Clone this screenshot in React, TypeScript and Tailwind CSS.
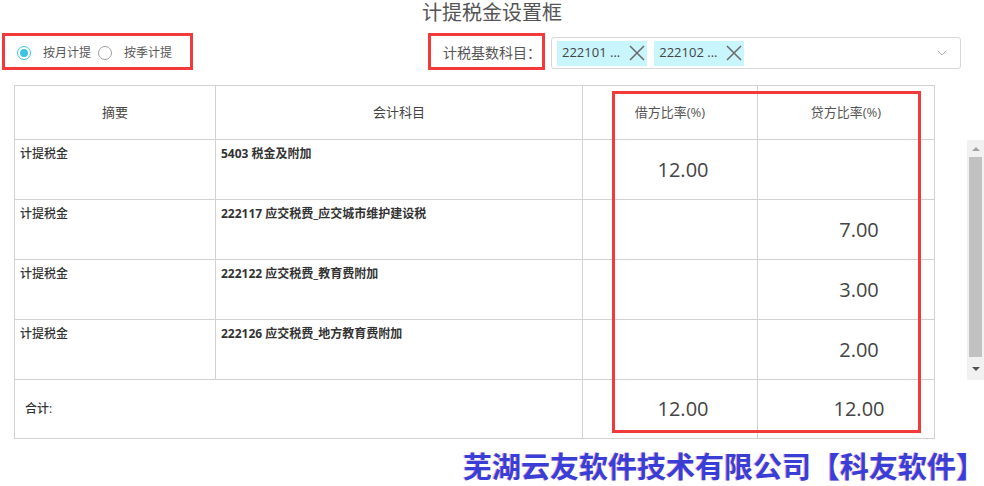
import React from 'react';
import { ChevronDown } from 'lucide-react';

const rows = [
  { summary: '计提税金', code: '5403', name: '税金及附加', debit: '12.00', credit: '' },
  { summary: '计提税金', code: '222117', name: '应交税费_应交城市维护建设税', debit: '', credit: '7.00' },
  { summary: '计提税金', code: '222122', name: '应交税费_教育费附加', debit: '', credit: '3.00' },
  { summary: '计提税金', code: '222126', name: '应交税费_地方教育费附加', debit: '', credit: '2.00' },
];

function Radio({ checked, label }: { checked?: boolean; label: string }) {
  return (
    <label className="flex items-center">
      <span
        className={
          checked
            ? 'w-[14px] h-[14px] rounded-full border border-[#3ec3e3] flex items-center justify-center'
            : 'w-[14px] h-[14px] rounded-full border border-[#a0a0a0]'
        }
      >
        {checked && <span className="w-[8px] h-[8px] rounded-full bg-[#3ec3e3]" />}
      </span>
      <span className="ml-[12px] text-[12px] text-[#555]">{label}</span>
    </label>
  );
}

function Tag({ text }: { text: string }) {
  return (
    <div className="h-[25px] bg-[#c9f5fc] flex items-center pl-[5px] pr-[2px] text-[13px] text-[#444]">
      <span>{text}</span>
      <svg width="16" height="16" viewBox="0 0 16 16" className="ml-[9px]">
        <path d="M1 1L15 15M15 1L1 15" stroke="#6a6a6a" strokeWidth="1.5" fill="none" />
      </svg>
    </div>
  );
}

export default function App() {
  return (
    <div
      className="relative w-[984px] h-[486px] bg-white overflow-hidden"
      style={{ fontFamily: '"Open Sans", "Noto Sans CJK SC", sans-serif' }}
    >
      <div className="h-[26px] text-center text-[20px] leading-[26px] text-[#555]">计提税金设置框</div>

      <div className="flex items-start mt-[7px]">
        <div className="ml-[2px] w-[191px] h-[37px] border-[3px] border-[#f23a3a] flex items-center pl-[12px] pt-[3px] gap-[7px]">
          <Radio checked label="按月计提" />
          <Radio label="按季计提" />
        </div>
        <div className="ml-[235px] w-[117px] h-[37px] border-[3px] border-[#f23a3a] flex items-center pl-[12px] pt-[2px] text-[14px] text-[#555]">
          计税基数科目：
        </div>
        <div className="ml-[6px] mt-[4px] w-[410px] h-[32px] border border-[#d6d6d6] rounded-[3px] flex items-center pl-[5px] pr-[10px] gap-[7px]">
          <Tag text="222101 ..." />
          <Tag text="222102 ..." />
          <ChevronDown size={16} strokeWidth={1.2} className="ml-auto text-[#999]" />
        </div>
      </div>

      <table className="ml-[14px] mt-[15px] border-collapse table-fixed w-[920px] text-[12px] text-[#333]">
        <colgroup>
          <col className="w-[201px]" />
          <col className="w-[367px]" />
          <col className="w-[175px]" />
          <col className="w-[177px]" />
        </colgroup>
        <thead>
          <tr className="h-[54px]">
            <th className="border border-[#d2d2d2] font-normal text-[13px] text-[#444]">摘要</th>
            <th className="border border-[#d2d2d2] font-normal text-[13px] text-[#444]">会计科目</th>
            <th className="border border-[#d2d2d2] font-normal text-[13px] text-[#555]">借方比率(%)</th>
            <th className="border border-[#d2d2d2] font-normal text-[13px] text-[#555]">贷方比率(%)</th>
          </tr>
        </thead>
        <tbody>
          {rows.map((r) => (
            <tr key={r.code} className="h-[60px]">
              <td className="border border-[#d2d2d2] align-top pl-[5px] pt-[5px] font-medium">{r.summary}</td>
              <td className="border border-[#d2d2d2] align-top pl-[5px] pt-[5px] font-bold text-[#333]">
                {r.code} {r.name}
              </td>
              <td className="border border-[#d2d2d2] text-center pl-[26px] text-[20px] text-[#444]">{r.debit}</td>
              <td className="border border-[#d2d2d2] text-center pl-[26px] text-[20px] text-[#444]">{r.credit}</td>
            </tr>
          ))}
          <tr className="h-[59px]">
            <td colSpan={2} className="border border-[#d2d2d2] pl-[10px] font-medium text-[#333]">合计:</td>
            <td className="border border-[#d2d2d2] text-center pl-[26px] text-[20px] text-[#444]">12.00</td>
            <td className="border border-[#d2d2d2] text-center pl-[26px] text-[20px] text-[#444]">12.00</td>
          </tr>
        </tbody>
      </table>

      {/* annotation frame over the ratio columns */}
      <div className="absolute left-[612px] top-[91px] w-[309px] h-[342px] border-[3px] border-[#f23a3a] pointer-events-none" />

      {/* scrollbar */}
      <div className="absolute left-[967px] top-[140px] w-[17px] h-[240px] bg-[#f1f1f1] flex flex-col items-center">
        <div className="h-[17px] flex items-center justify-center">
          <div className="w-0 h-0 border-l-[4px] border-r-[4px] border-b-[4px] border-l-transparent border-r-transparent border-b-[#a3a3a3]" />
        </div>
        <div className="w-[13px] flex-1 bg-[#c1c1c1]" />
        <div className="h-[23px] flex items-center justify-center">
          <div className="w-0 h-0 border-l-[4px] border-r-[4px] border-t-[4px] border-l-transparent border-r-transparent border-t-[#505050]" />
        </div>
      </div>

      <div
        className="absolute right-[-1px] top-[446px] text-[29px] leading-[38px] font-bold text-[#393ed6] [text-shadow:-1px_0_0_rgba(220,60,120,0.45)]"
        style={{ fontFamily: '"Noto Sans CJK SC", sans-serif' }}
      >
        芜湖云友软件技术有限公司【科友软件】
      </div>
    </div>
  );
}
